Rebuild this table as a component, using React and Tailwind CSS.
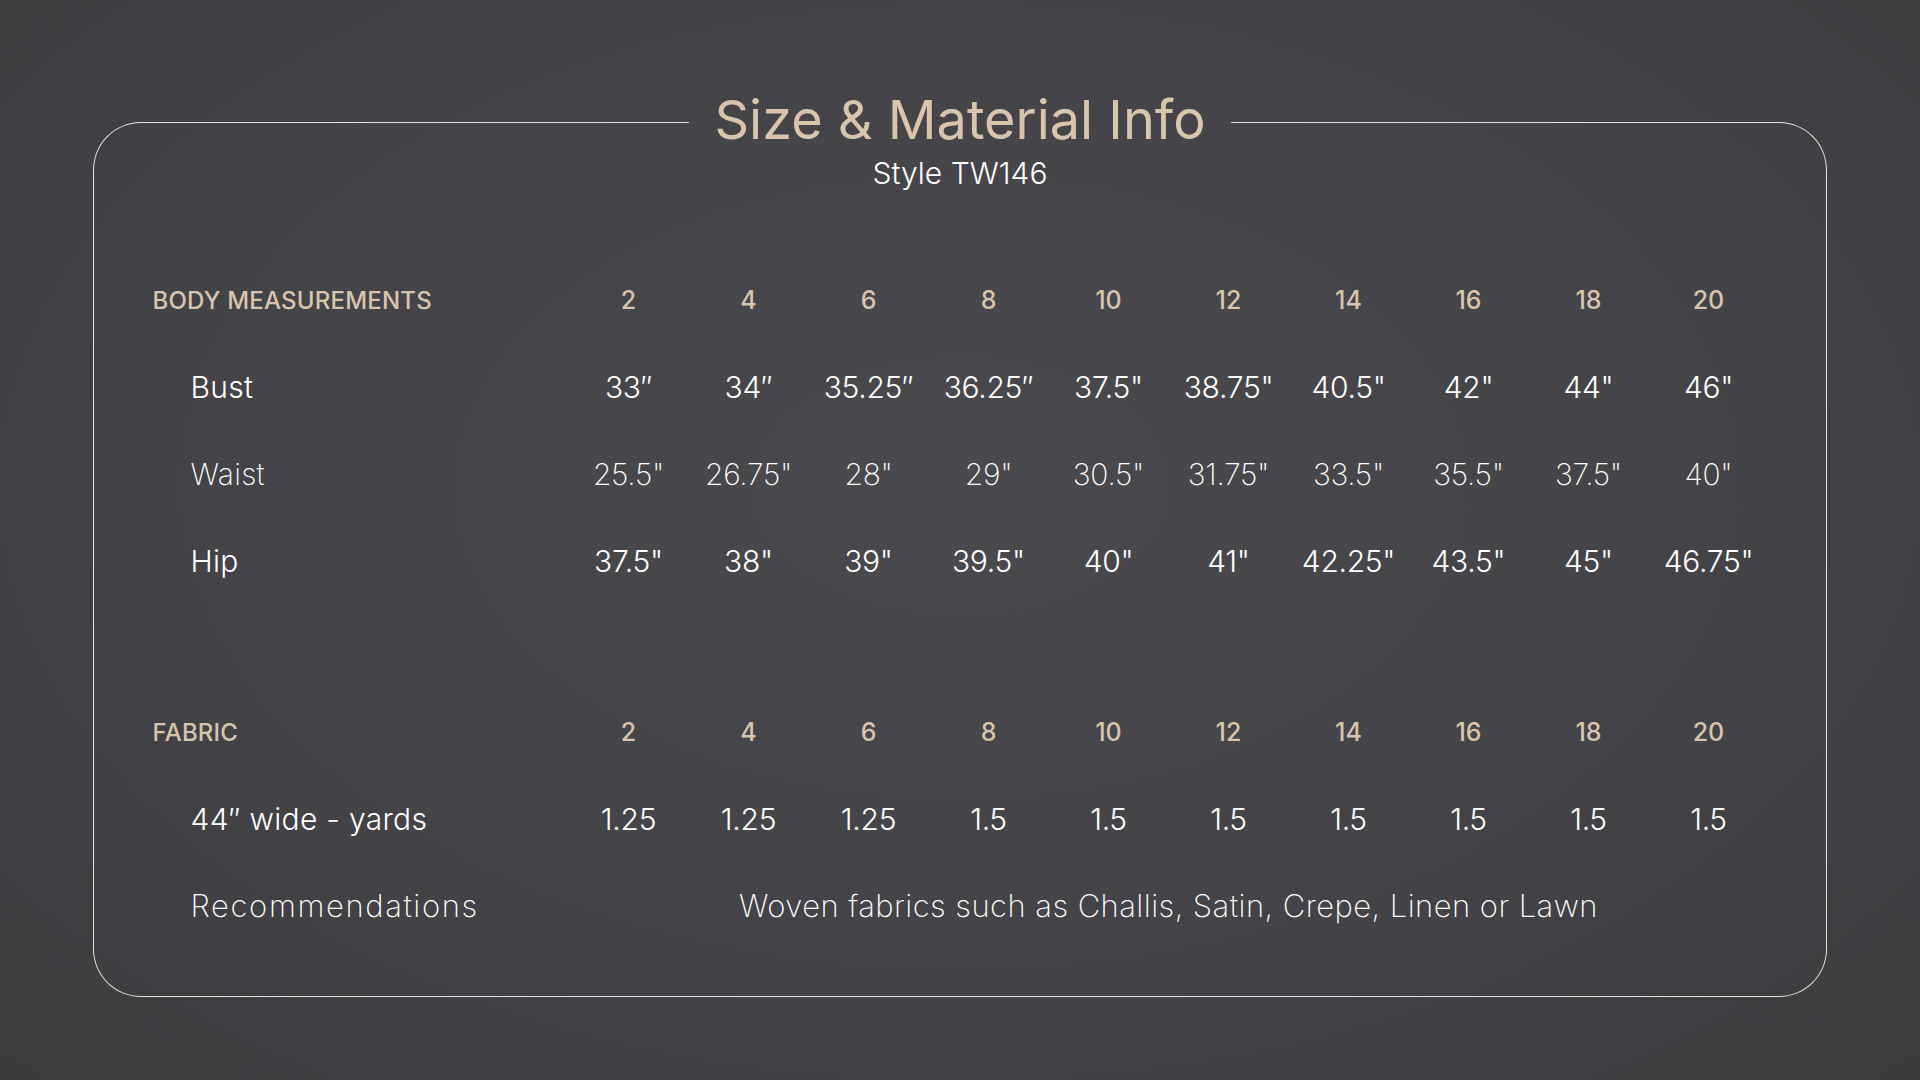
import React from "react";

const sizes = ["2", "4", "6", "8", "10", "12", "14", "16", "18", "20"];
const bust = ["33″", "34″", "35.25″", "36.25″", '37.5"', '38.75"', '40.5"', '42"', '44"', '46"'];
const waist = ['25.5"', '26.75"', '28"', '29"', '30.5"', '31.75"', '33.5"', '35.5"', '37.5"', '40"'];
const hip = ['37.5"', '38"', '39"', '39.5"', '40"', '41"', '42.25"', '43.5"', '45"', '46.75"'];
const yards = ["1.25", "1.25", "1.25", "1.5", "1.5", "1.5", "1.5", "1.5", "1.5", "1.5"];

function HeaderRow({ label }) {
  return (
    <>
      <div className="h-[87px] flex items-center text-[24px] font-medium tracking-[0.2px] text-[#d8c5ab]">{label}</div>
      {sizes.map((s, i) => (
        <div key={i} className="h-[87px] flex items-center justify-center text-[25px] font-medium text-[#d8c5ab]">
          {s}
        </div>
      ))}
    </>
  );
}

function DataRow({ label, values, weight }) {
  return (
    <>
      <div className={`h-[87px] flex items-center pl-[38px] text-[30px] tracking-[0.3px] text-white ${weight}`}>{label}</div>
      {values.map((v, i) => (
        <div key={i} className={`h-[87px] flex items-center justify-center text-[30px] tracking-[-0.3px] text-white ${weight}`}>
          {v}
        </div>
      ))}
    </>
  );
}

export default function App() {
  return (
    <div className="w-full h-[1080px] overflow-hidden bg-[radial-gradient(ellipse_at_50%_45%,#4a494e_0%,#444347_55%,#3c3c3f_100%)] px-[93px] pt-[122px] font-['Inter',sans-serif]">
      <div className="flex h-[135px]">
        <div className="flex-1 border-t-[1.5px] border-l-[1.5px] border-[#e2e2e2] rounded-tl-[48px]" />
        <div className="self-start -mt-[34px] px-[25px] flex flex-col items-center">
          <div className="text-[54px] leading-[64px] font-normal text-[#d8c5ab]">Size &amp; Material Info</div>
          <div className="mt-[1px] text-[30px] leading-[40px] font-light text-white">Style TW146</div>
        </div>
        <div className="flex-1 border-t-[1.5px] border-r-[1.5px] border-[#e2e2e2] rounded-tr-[48px]" />
      </div>
      <div className="border-l-[1.5px] border-r-[1.5px] border-b-[1.5px] border-[#e2e2e2] rounded-b-[48px] pl-[58.5px] pb-[46px]">
        <div className="grid grid-cols-[416px_repeat(10,120px)]">
          <HeaderRow label="BODY MEASUREMENTS" />
          <DataRow label="Bust" values={bust} weight="font-light" />
          <DataRow label="Waist" values={waist} weight="font-extralight" />
          <DataRow label="Hip" values={hip} weight="font-light" />
          <div className="col-span-11 h-[84px]" />
          <HeaderRow label="FABRIC" />
          <DataRow label="44″ wide - yards" values={yards} weight="font-light" />
          <div className="h-[87px] flex items-center pl-[38px] text-[31px] tracking-[1.6px] font-extralight text-white">Recommendations</div>
          <div className="col-span-10 h-[87px] flex items-center justify-center text-[31px] tracking-[0.45px] font-extralight text-white">
            Woven fabrics such as Challis, Satin, Crepe, Linen or Lawn
          </div>
        </div>
      </div>
    </div>
  );
}
